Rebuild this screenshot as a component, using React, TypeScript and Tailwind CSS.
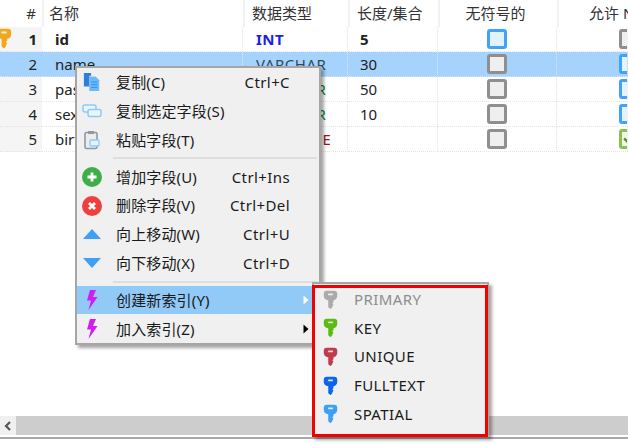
import React from "react";

const font = { fontFamily: '"Noto Sans", "Noto Sans CJK SC", sans-serif' };
const grid = "grid grid-cols-[42px_201px_105px_90px_119px_71px]";

function Key({ color, w = 15 }: { color: string; w?: number }) {
  return (
    <svg width={w} height={w * 1.3} viewBox="0 0 20 26">
      <path
        d="M5 1h10a4 4 0 0 1 4 4v3a6 6 0 0 1-5 5.500V16l-1.500 1.500L14 19.500l-1.500 2V23L10 25.500 7 23V13.500A6 6 0 0 1 1 8V5a4 4 0 0 1 4-4z"
        fill={color}
      />
      <rect x="6.500" y="4.500" width="7" height="2.400" rx="1.200" fill="#fff" fillOpacity="0.8" />
    </svg>
  );
}

function Check({ kind }: { kind: "blue" | "gray" | "green" }) {
  const cls =
    kind === "blue"
      ? "border-[#3fa4f8] bg-[#e2f3fe]"
      : kind === "gray"
        ? "border-[#8f8f8f] bg-[#efefef]"
        : "border-[#8cc152] bg-[#f0f7e6]";
  return (
    <div className={`flex h-[20px] w-[20px] shrink-0 items-center justify-center rounded-[3px] border-[3px] ${cls}`}>
      {kind === "green" && (
        <svg width="14" height="14" viewBox="0 0 13 13">
          <path d="M2 6l3 3 6-6" fill="none" stroke="#4f8f2f" strokeWidth="2.200" />
        </svg>
      )}
    </div>
  );
}

const rows = [
  { n: 1, name: "id", type: "INT", tc: "text-[#1c1cf0]", len: "5", u: "blue", a: "gray", bold: true },
  { n: 2, name: "name", type: "VARCHAR", tc: "text-[#2c4a5a]", len: "30", u: "gray", a: "blue", sel: true },
  { n: 3, name: "password", type: "VARCHAR", tc: "text-[#0b8a3c]", len: "50", u: "gray", a: "blue" },
  { n: 4, name: "sex", type: "VARCHAR", tc: "text-[#0b8a3c]", len: "10", u: "gray", a: "blue" },
  { n: 5, name: "birthday", type: "DATETIME", tc: "text-[#a01818]", len: "", u: "gray", a: "green" },
] as const;

function CopyIcon() {
  return (
    <svg width="18" height="20" viewBox="0 0 20 22">
      <path d="M1 1h8v3H7v12H1z" fill="#2f7fd8" />
      <path d="M7 5h7l4 4v12H7z" fill="#6db8f7" />
      <path d="M9 11h7M9 14h7M9 17h7" stroke="#2f8fe8" strokeWidth="1" />
    </svg>
  );
}
function CopyFieldIcon() {
  return (
    <svg width="20" height="14" viewBox="0 0 20 14">
      <rect x="1" y="1" width="13" height="7" rx="2" fill="#eaf5fe" stroke="#8ccbf8" strokeWidth="1.500" />
      <rect x="6" y="5.500" width="13" height="7" rx="2" fill="#eaf5fe" stroke="#8ccbf8" strokeWidth="1.500" />
    </svg>
  );
}
function PasteIcon() {
  return (
    <svg width="16" height="20" viewBox="0 0 16 20">
      <rect x="1" y="2.500" width="12" height="16" rx="1.500" fill="#ececec" stroke="#8d9aa3" strokeWidth="1.600" />
      <rect x="4" y="1" width="6" height="3" fill="#8d9aa3" />
      <rect x="6" y="10" width="9" height="6" rx="1" fill="#e6f3fd" stroke="#8ccbf8" strokeWidth="1.300" />
    </svg>
  );
}
function Circle({ color, kind }: { color: string; kind: "plus" | "x" }) {
  return (
    <svg width="20" height="20" viewBox="0 0 20 20">
      <circle cx="10" cy="10" r="10" fill={color} />
      <path
        d={kind === "plus" ? "M10 5.500v9M5.500 10h9" : "M7 7l6 6M13 7l-6 6"}
        stroke="#fff"
        strokeWidth="2.800"
      />
    </svg>
  );
}
function Tri({ up }: { up?: boolean }) {
  return (
    <svg width="20" height="12" viewBox="0 0 20 12">
      <path d={up ? "M10 1l9 10H1z" : "M1 1h18l-9 10z"} fill="#3fa0f5" />
    </svg>
  );
}
function Bolt() {
  return (
    <svg width="12" height="20" viewBox="0 0 12 20">
      <path d="M4 0h6L7 7h4.500L2.500 20l2.500-9.500H1z" fill="#d21cf0" />
    </svg>
  );
}

function Item({
  icon,
  label,
  sc,
  active,
  arrow,
}: {
  icon: React.ReactNode;
  label: string;
  sc?: string;
  active?: boolean;
  arrow?: "white" | "black";
}) {
  return (
    <div className={`flex h-[28.8px] items-center ${active ? "bg-[#91c9f7]" : ""}`}>
      <div className="flex w-[30px] shrink-0 items-center justify-center">{icon}</div>
      <div className="ml-[9px] w-[115px] shrink-0 whitespace-nowrap tracking-[0.15px] text-[#1a1a1a]">{label}</div>
      <div className="flex w-[59px] shrink-0 justify-end whitespace-nowrap tracking-[0.4px] text-[#1a1a1a]">
        {sc}
      </div>
      {arrow && (
        <svg className="ml-[13px]" width="6" height="10" viewBox="0 0 6 10">
          <path d="M0.500 0.500L5.500 5 0.500 9.500z" fill={arrow === "white" ? "#fff" : "#000"} />
        </svg>
      )}
    </div>
  );
}

function Sep() {
  return <div className="my-[3px] ml-[36px] mr-[2px] h-[2px] bg-[#dedede]" />;
}

function SubItem({ color, label, dim }: { color: string; label: string; dim?: boolean }) {
  return (
    <div className="flex h-[28.7px] items-center">
      <div className="flex w-[32px] shrink-0 justify-center">
        <Key color={color} />
      </div>
      <div className={`ml-[8px] tracking-[0.4px] ${dim ? "text-[#8d8d8d]" : "text-[#1a1a1a]"}`}>{label}</div>
    </div>
  );
}

export default function App() {
  return (
    <div className="relative flex h-[444px] w-[628px] flex-col overflow-hidden bg-white text-[15px] text-[#222]" style={font}>
      <div className={`${grid} h-[27px] shrink-0 items-center text-[#333]`}>
        <div className="pr-[6px] text-right">#</div>
        <div className="flex h-full items-center border-l-2 border-[#f2f2f2] pl-[5px]">名称</div>
        <div className="flex h-full items-center border-l-2 border-[#f2f2f2] pl-[7px]">数据类型</div>
        <div className="flex h-full items-center border-l-2 border-[#f2f2f2] pl-[7px]">长度/集合</div>
        <div className="flex h-full items-center justify-center border-l-2 border-[#f2f2f2] pr-[6px]">无符号的</div>
        <div className="flex h-full items-center gap-[4px] overflow-hidden whitespace-nowrap border-l-2 border-[#f2f2f2] pl-[30px]">允许 NULL</div>
      </div>
      {rows.map((r) => {
        const sel = "sel" in r && r.sel;
        const bold = "bold" in r && r.bold;
        const cell = `flex h-full items-center overflow-hidden border-r border-b border-dotted border-[#e4e4e4] ${sel ? "bg-[#a5d3fd]" : ""}`;
        return (
          <div key={r.n} className={`${grid} h-[25px] shrink-0 ${bold ? "font-bold" : ""}`}>
            <div className={`relative flex h-full items-center justify-end border-b border-dotted border-[#e4e4e4] pr-[5px] ${sel ? "bg-[#a5d3fd]" : "bg-[#f5f5f5]"}`}>
              {r.n === 1 && (
                <span className="absolute left-[-4px] top-[1px]">
                  <Key color="#f0a81e" w={16} />
                </span>
              )}
              {r.n}
            </div>
            <div className={`${cell} pl-[13px]`}>{r.name}</div>
            <div className={`${cell} pl-[13px] tracking-[0.5px] ${r.tc}`}>{r.type}</div>
            <div className={`${cell} pl-[12px]`}>{r.len}</div>
            <div className={`${cell} justify-center`}>
              <Check kind={r.u} />
            </div>
            <div className={`${cell} pl-[62px]`}>
              <Check kind={r.a} />
            </div>
          </div>
        );
      })}
      <div className="flex-1" />
      <div className="flex h-[19px] shrink-0 bg-[#cdcdcd]">
        <div className="flex w-[16px] items-center justify-center bg-[#f0f0f0]">
          <svg width="8" height="10" viewBox="0 0 8 10">
            <path d="M6 1L2 5l4 4" fill="none" stroke="#555" strokeWidth="2.200" />
          </svg>
        </div>
      </div>
      <div className="mt-[2px] h-[2px] shrink-0 bg-[#a8a8a8]" />
      <div className="h-[5px] shrink-0" />

      <div className="absolute left-[75px] top-[66px] w-[246px] border-2 border-[#a6a6a6] bg-[#f0f0f0] shadow-[3px_3px_3px_rgba(0,0,0,0.35)]">
        <Item icon={<CopyIcon />} label="复制(C)" sc="Ctrl+C" />
        <Item icon={<CopyFieldIcon />} label="复制选定字段(S)" />
        <Item icon={<PasteIcon />} label="粘贴字段(T)" />
        <Sep />
        <Item icon={<Circle color="#3fae4a" kind="plus" />} label="增加字段(U)" sc="Ctrl+Ins" />
        <Item icon={<Circle color="#ef3f3f" kind="x" />} label="删除字段(V)" sc="Ctrl+Del" />
        <Item icon={<Tri up />} label="向上移动(W)" sc="Ctrl+U" />
        <Item icon={<Tri />} label="向下移动(X)" sc="Ctrl+D" />
        <Sep />
        <Item icon={<Bolt />} label="创建新索引(Y)" active arrow="white" />
        <Item icon={<Bolt />} label="加入索引(Z)" arrow="black" />
      </div>

      <div className="absolute left-[312px] top-[282px] h-[155px] w-[177px] border-2 border-[#a6a6a6] bg-[#f0f0f0] pt-[1px] shadow-[3px_3px_3px_rgba(0,0,0,0.35)]">
        <SubItem color="#aaaaaa" label="PRIMARY" dim />
        <SubItem color="#5cbb12" label="KEY" />
        <SubItem color="#c03c4c" label="UNIQUE" />
        <SubItem color="#0d64f0" label="FULLTEXT" />
        <SubItem color="#3d9ff5" label="SPATIAL" />
      </div>
      <div className="absolute left-[312px] top-[285px] h-[152px] w-[176px] border-[3px] border-[#f00000]" />
    </div>
  );
}
